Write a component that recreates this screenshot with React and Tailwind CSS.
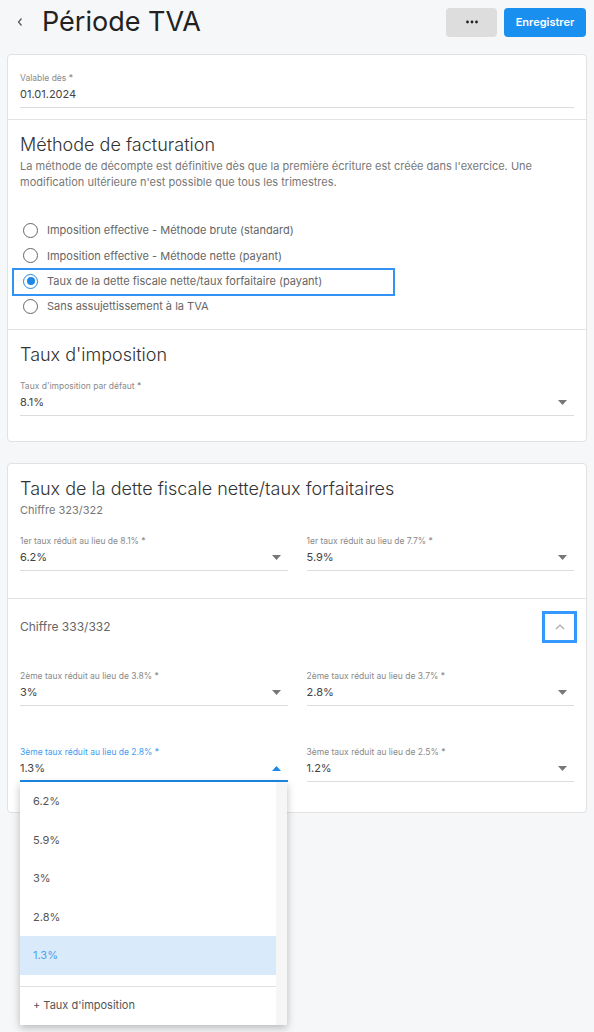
import React from "react";

const Caret = ({ up = false, blue = false }) => (
  <svg width="9" height="5" viewBox="0 0 9 5" className="shrink-0">
    {up ? (
      <path d="M0 5 L4.5 0 L9 5 Z" fill={blue ? "#1e88e5" : "#777"} />
    ) : (
      <path d="M0 0 L4.5 5 L9 0 Z" fill="#777" />
    )}
  </svg>
);

const Field = ({ label, value, select = true, active = false }) => (
  <div className="flex flex-col">
    <div className={`text-[8.5px] leading-[12px] ${active ? "text-[#3d9df0]" : "text-[#8a8a8a]"}`}>{label}</div>
    <div
      className={`flex items-center justify-between h-[24px] pb-[2px] pr-[7px] ${
        active ? "border-b-2 border-[#1e88e5]" : "border-b border-[#dcdcdc]"
      }`}
    >
      <span className="text-[11px] text-[#444]">{value}</span>
      {select && <Caret up={active} blue={active} />}
    </div>
  </div>
);

const Radio = ({ label, checked = false, highlight = false }) => (
  <div className="relative flex items-center h-[25.3px]">
    {highlight && (
      <span className="absolute left-[-8px] top-[-1px] w-[383px] h-[28px] border-2 border-[#3393f5] pointer-events-none" />
    )}
    <span
      className={`w-[15px] h-[15px] rounded-full border-[1.5px] ml-[3px] mr-[9px] flex items-center justify-center ${
        checked ? "border-[#1e88e5]" : "border-[#666]"
      }`}
    >
      {checked && <span className="w-[8px] h-[8px] rounded-full bg-[#1e88e5]" />}
    </span>
    <span className="text-[11px] text-[#666]">{label}</span>
  </div>
);

export default function App() {
  return (
    <div
      className="min-h-[1032px] bg-[#f6f7f8] relative overflow-hidden"
      style={{ fontFamily: "Inter, 'Noto Sans', sans-serif" }}
    >
      {/* Header */}
      <div className="flex items-center h-[43px] pl-[16px] pr-[8px] pt-[1px]">
        <svg width="8" height="10" viewBox="0 0 8 10" className="mr-[18px]">
          <path d="M5.5 1.5 L2.5 5 L5.5 8.5" stroke="#555" strokeWidth="1.2" fill="none" />
        </svg>
        <h1 className="text-[27px] leading-[32px] text-[#222] font-normal">Période TVA</h1>
        <div className="flex-1" />
        <button className="w-[51px] h-[29px] rounded-[4px] bg-[#dddddd] flex items-center justify-center">
          <svg width="14" height="4" viewBox="0 0 14 4">
            <circle cx="2.5" cy="2" r="1.4" fill="#222" />
            <circle cx="7" cy="2" r="1.4" fill="#222" />
            <circle cx="11.5" cy="2" r="1.4" fill="#222" />
          </svg>
        </button>
        <button className="ml-[7px] w-[82px] h-[29px] rounded-[4px] bg-[#1990f0] text-white text-[11px] font-semibold">
          Enregistrer
        </button>
      </div>

      <div className="px-[7px] pt-[11px] flex flex-col gap-[21px]">
        {/* Card 1 */}
        <div className="bg-white border border-[#e2e2e2] rounded-[4px]">
          <div className="px-[12px] pt-[17px] pb-[11px]">
            <Field label="Valable dès *" value="01.01.2024" select={false} />
          </div>
          <div className="border-t border-[#e2e2e2] px-[12px] pt-[12px] pb-[10px]">
            <div className="text-[18px] leading-[26px] font-light text-[#333]">Méthode de facturation</div>
            <div className="text-[11px] leading-[16px] text-[#777]">
              La méthode de décompte est définitive dès que la première écriture est créée dans l'exercice. Une
              modification ultérieure n'est possible que tous les trimestres.
            </div>
            <div className="mt-[28px] flex flex-col">
              <Radio label="Imposition effective - Méthode brute (standard)" />
              <Radio label="Imposition effective - Méthode nette (payant)" />
              <Radio label="Taux de la dette fiscale nette/taux forfaitaire (payant)" checked highlight />
              <Radio label="Sans assujettissement à la TVA" />
            </div>
          </div>
          <div className="border-t border-[#e2e2e2] px-[12px] pt-[12px] pb-[25px]">
            <div className="text-[18px] leading-[26px] font-light text-[#333]">Taux d'imposition</div>
            <div className="mt-[12px]">
              <Field label="Taux d'imposition par défaut *" value="8.1%" />
            </div>
          </div>
        </div>

        {/* Card 2 */}
        <div className="bg-white border border-[#e2e2e2] rounded-[4px]">
          <div className="px-[12px] pt-[12px] pb-[27px]">
            <div className="text-[18px] leading-[26px] font-light text-[#333]">
              Taux de la dette fiscale nette/taux forfaitaires
            </div>
            <div className="text-[11px] leading-[16px] text-[#777]">Chiffre 323/322</div>
            <div className="mt-[17px] grid grid-cols-2 gap-x-[19px]">
              <Field label="1er taux réduit au lieu de 8.1% *" value="6.2%" />
              <Field label="1er taux réduit au lieu de 7.7% *" value="5.9%" />
            </div>
          </div>
          <div className="border-t border-[#e2e2e2] px-[12px] pt-[12px] pb-[30px]">
            <div className="flex items-center justify-between h-[32px]">
              <span className="text-[12px] text-[#666]">Chiffre 333/332</span>
              <span className="w-[35px] h-[32px] border-[3px] border-[#3399ff] flex items-center justify-center mr-[-3px]">
                <svg width="10" height="6" viewBox="0 0 10 6">
                  <path d="M1 5 L5 1 L9 5" stroke="#aaa" strokeWidth="1.2" fill="none" />
                </svg>
              </span>
            </div>
            <div className="mt-[27px] grid grid-cols-2 gap-x-[19px]">
              <Field label="2ème taux réduit au lieu de 3.8% *" value="3%" />
              <Field label="2ème taux réduit au lieu de 3.7% *" value="2.8%" />
            </div>
            <div className="mt-[40px] grid grid-cols-2 gap-x-[19px]">
              <div className="relative">
                <Field label="3ème taux réduit au lieu de 2.8% *" value="1.3%" active />
                {/* Dropdown menu */}
                <div className="absolute left-0 top-full w-[267px] bg-white shadow-[0_3px_8px_rgba(0,0,0,0.25)] z-10 flex">
                  <div className="flex-1 flex flex-col">
                    {["6.2%", "5.9%", "3%", "2.8%"].map((v) => (
                      <div key={v} className="h-[38.5px] flex items-center pl-[13px] text-[11px] text-[#555]">
                        {v}
                      </div>
                    ))}
                    <div className="h-[38.5px] flex items-center pl-[13px] text-[11px] text-[#4ba3ef] bg-[#d9eafa]">
                      1.3%
                    </div>
                    <div className="h-[11px]" />
                    <div className="border-t border-[#e0e0e0] h-[39px] flex items-center pl-[13px] text-[11px] text-[#555]">
                      + Taux d'imposition
                    </div>
                  </div>
                  <div className="w-[11px] bg-[#f6f6f6]" />
                </div>
              </div>
              <Field label="3ème taux réduit au lieu de 2.5% *" value="1.2%" />
            </div>
          </div>
        </div>
      </div>
    </div>
  );
}
